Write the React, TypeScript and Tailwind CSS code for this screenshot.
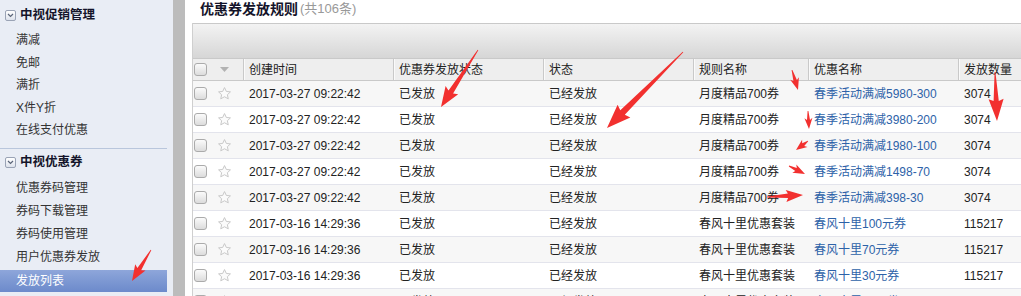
import React from "react";

type Row = {
  date: string;
  sendStatus: string;
  status: string;
  rule: string;
  name: string;
  count: string;
};

const rows: Row[] = [
  { date: "2017-03-27 09:22:42", sendStatus: "已发放", status: "已经发放", rule: "月度精品700券", name: "春季活动满减5980-300", count: "3074" },
  { date: "2017-03-27 09:22:42", sendStatus: "已发放", status: "已经发放", rule: "月度精品700券", name: "春季活动满减3980-200", count: "3074" },
  { date: "2017-03-27 09:22:42", sendStatus: "已发放", status: "已经发放", rule: "月度精品700券", name: "春季活动满减1980-100", count: "3074" },
  { date: "2017-03-27 09:22:42", sendStatus: "已发放", status: "已经发放", rule: "月度精品700券", name: "春季活动满减1498-70", count: "3074" },
  { date: "2017-03-27 09:22:42", sendStatus: "已发放", status: "已经发放", rule: "月度精品700券", name: "春季活动满减398-30", count: "3074" },
  { date: "2017-03-16 14:29:36", sendStatus: "已发放", status: "已经发放", rule: "春风十里优惠套装", name: "春风十里100元券", count: "115217" },
  { date: "2017-03-16 14:29:36", sendStatus: "已发放", status: "已经发放", rule: "春风十里优惠套装", name: "春风十里70元券", count: "115217" },
  { date: "2017-03-16 14:29:36", sendStatus: "已发放", status: "已经发放", rule: "春风十里优惠套装", name: "春风十里30元券", count: "115217" },
  { date: "2017-03-16 14:29:36", sendStatus: "已发放", status: "已经发放", rule: "春风十里优惠套装", name: "春风十里50元券", count: "115217" },
];

const promoItems = ["满减", "免邮", "满折", "X件Y折", "在线支付优惠"];
const couponItems = ["优惠券码管理", "券码下载管理", "券码使用管理", "用户优惠券发放"];

// red annotation arrows: tail -> tip
const arrows = [
  { x1: 151, y1: 250, x2: 132, y2: 281, h: 14, hw: 6, sw: 2.2 },
  { x1: 478, y1: 50, x2: 441, y2: 107, h: 18, hw: 7.5, sw: 2.8 },
  { x1: 683, y1: 52, x2: 607, y2: 128, h: 22, hw: 9, sw: 3.2 },
  { x1: 792, y1: 70, x2: 798, y2: 90, h: 10, hw: 4.5, sw: 1.8 },
  { x1: 808, y1: 111, x2: 809, y2: 129, h: 9, hw: 4, sw: 1.5 },
  { x1: 995, y1: 72, x2: 997, y2: 121, h: 20, hw: 7.5, sw: 2.6 },
  { x1: 808, y1: 141, x2: 796, y2: 150, h: 9, hw: 4.5, sw: 1.6 },
  { x1: 789, y1: 166, x2: 805, y2: 174, h: 10, hw: 4.5, sw: 1.6 },
  { x1: 767, y1: 197, x2: 803, y2: 195, h: 15, hw: 6, sw: 2.2 },
];

function arrowPoints(a: (typeof arrows)[number]) {
  const dx = a.x2 - a.x1;
  const dy = a.y2 - a.y1;
  const len = Math.hypot(dx, dy);
  const ux = dx / len;
  const uy = dy / len;
  const nx = -uy;
  const ny = ux;
  const bx = a.x2 - ux * a.h;
  const by = a.y2 - uy * a.h;
  const tw = 0.4;
  const pts = [
    [a.x1 + nx * tw, a.y1 + ny * tw],
    [bx + nx * a.sw, by + ny * a.sw],
    [bx - ux * 2 + nx * a.hw, by - uy * 2 + ny * a.hw],
    [a.x2, a.y2],
    [bx - ux * 2 - nx * a.hw, by - uy * 2 - ny * a.hw],
    [bx - nx * a.sw, by - ny * a.sw],
    [a.x1 - nx * tw, a.y1 - ny * tw],
  ];
  return pts.map((p) => p.map((v) => v.toFixed(1)).join(",")).join(" ");
}

function ExpandIcon() {
  return (
    <span className="flex h-[11px] w-[11px] items-center justify-center rounded-[2px] border border-[#9aa3b5] bg-gradient-to-b from-white to-[#dde2ec]">
      <svg width="7" height="5" viewBox="0 0 7 5">
        <path d="M1 1 L3.5 3.5 L6 1" fill="none" stroke="#5a6478" strokeWidth="1.2" />
      </svg>
    </span>
  );
}

function Checkbox() {
  return <span className="block h-[13px] w-[13px] rounded-[3px] border border-[#ababab] bg-gradient-to-b from-[#fbfbfb] to-[#dcdcdc]" />;
}

function Star() {
  return (
    <svg width="15" height="15" viewBox="0 0 24 24">
      <path
        d="M12 2.5l2.9 6.2 6.6.7-4.9 4.5 1.4 6.6L12 17.2l-6 3.3 1.4-6.6-4.9-4.5 6.6-.7z"
        fill="#fbfbfb"
        stroke="#c9c9c9"
        strokeWidth="1.6"
        strokeLinejoin="round"
      />
    </svg>
  );
}

function SideHeader({ label }: { label: string }) {
  return (
    <div className="flex h-[28px] items-center gap-[4px] pl-[5px] text-[12.5px] font-bold text-[#14142a]">
      <ExpandIcon />
      <span>{label}</span>
    </div>
  );
}

const cols = "grid grid-cols-[50px_150px_150px_150px_115px_150px_110px]";

export default function App() {
  return (
    <div className="relative flex h-[296px] w-[1021px] overflow-hidden bg-white font-['Liberation_Sans','Noto_Sans_CJK_SC',sans-serif] text-[12px] text-[#222]">
      {/* sidebar */}
      <aside className="w-[173px] shrink-0 bg-[#e9edf5] pr-[6px]">
        <div className="h-[29px] pt-px">
          <SideHeader label="中视促销管理" />
        </div>
        {promoItems.map((t) => (
          <div key={t} className="flex h-[22.5px] items-center pl-[16px] text-[#333]">
            {t}
          </div>
        ))}
        <div className="mt-[6px] h-px bg-[#b9c6dc]" />
        <SideHeader label="中视优惠券" />
        {couponItems.map((t) => (
          <div key={t} className="flex h-[23px] items-center pl-[16px] text-[#333]">
            {t}
          </div>
        ))}
        <div className="mt-px flex h-[22px] items-center bg-gradient-to-b from-[#8ea6da] to-[#6c8acb] pl-[16px] text-white">
          发放列表
        </div>
      </aside>

      {/* splitter */}
      <div className="w-[12px] shrink-0 bg-[#bcbcbc]" />

      {/* content */}
      <main className="min-w-0 flex-1 pl-[7px]">
        <div className="flex h-[23px] items-start pl-[8px] pt-px">
          <span className="text-[14px] font-bold leading-[16px] text-[#14142a]">优惠券发放规则</span>
          <span className="ml-[2px] text-[13px] leading-[16px] text-[#999]">(共106条)</span>
        </div>

        <div className="w-[880px] border-l border-[#cfcfcf]">
          <div className="h-[35px] border-t border-[#c9c9c9] bg-gradient-to-b from-[#f3f3f3] to-[#d6d6d6]" />

          <div className={`${cols} h-[23px] border-y border-[#c9c9c9] bg-[#eeeeee] text-[#222]`}>
            <div className="flex items-center gap-[13px] pl-px">
              <Checkbox />
              <svg width="9" height="5" viewBox="0 0 9 5">
                <path d="M0 0 H9 L4.5 5 Z" fill="#b2b2b2" />
              </svg>
            </div>
            {["创建时间", "优惠券发放状态", "状态", "规则名称", "优惠名称", "发放数量"].map((h) => (
              <div key={h} className="flex items-center border-l border-[#c9c9c9] pl-[5px] shadow-[inset_1px_0_0_#fafafa]">
                {h}
              </div>
            ))}
          </div>

          {rows.map((r, i) => (
            <div
              key={i}
              className={`${cols} h-[26px] items-center border-b border-[#e3e4ec] ${i % 2 === 0 ? "bg-[#f7f7f7]" : "bg-white"}`}
            >
              <div className="flex items-center gap-[10px] pl-px">
                <Checkbox />
                <Star />
              </div>
              <div className="pl-[6px]">{r.date}</div>
              <div className="pl-[6px]">{r.sendStatus}</div>
              <div className="pl-[6px]">{r.status}</div>
              <div className="pl-[6px]">{r.rule}</div>
              <div className="pl-[6px] text-[#2d62a8]">{r.name}</div>
              <div className="pl-[6px]">{r.count}</div>
            </div>
          ))}
        </div>
      </main>

      {/* annotation arrows */}
      <svg className="pointer-events-none absolute left-0 top-0" width="1021" height="296">
        {arrows.map((a, i) => (
          <polygon key={i} points={arrowPoints(a)} fill="#f2302f" />
        ))}
      </svg>
    </div>
  );
}
